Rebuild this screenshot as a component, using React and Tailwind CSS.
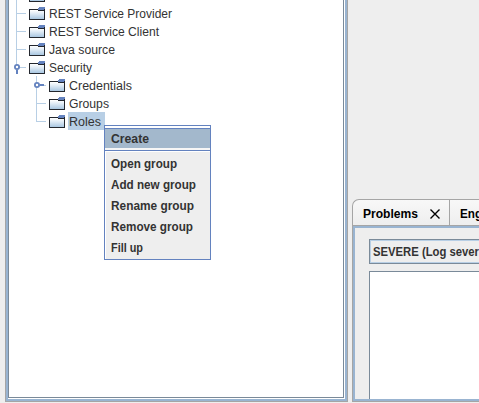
const rows = [
  { label: '', depth: 0 },
  { label: 'REST Service Provider', depth: 0, w: 123 },
  { label: 'REST Service Client', depth: 0, w: 110 },
  { label: 'Java source', depth: 0, w: 66 },
  { label: 'Security', depth: 0, toggle: 'open', w: 43 },
  { label: 'Credentials', depth: 1, toggle: 'closed', w: 63 },
  { label: 'Groups', depth: 1, w: 40 },
  { label: 'Roles', depth: 1, w: 32, selected: true },
];

const items = [
  ['Open group', 66],
  ['Add new group', 85],
  ['Rename group', 83],
  ['Remove group', 82],
  ['Fill up', 32],
];

function Folder() {
  return (
    <svg className="mt-[2px] block shrink-0" width="16" height="16" viewBox="0 0 16 16" shapeRendering="crispEdges">
      <defs>
        <linearGradient id="fold" x1="0" y1="0" x2="0" y2="1">
          <stop offset="0" stopColor="#ffffff" />
          <stop offset="0.35" stopColor="#e4eef7" />
          <stop offset="1" stopColor="#a9c7e1" />
        </linearGradient>
      </defs>
      <rect x="1" y="4" width="14" height="9" fill="url(#fold)" />
      <path d="M0 3h9v1H0zM0 3h1v11H0zM0 13h16v1H0zM15 3h1v11h-1zM9 4h6v1H9z" fill="#23272e" />
      <path d="M10 1h6v1h-6zM9 2h7v1H9zM9 3h6v1H9z" fill="#6382bf" />
    </svg>
  );
}

function Branch({ row, end }) {
  return (
    <svg className="block shrink-0" width="16" height="18" viewBox="0 0 16 18">
      <rect x="3" y="0" width="1" height={end ? 10 : 18} fill="#b8cfe5" shapeRendering="crispEdges" />
      <rect x="4" y="9" width="9" height="1" fill="#b8cfe5" shapeRendering="crispEdges" />
      {row.toggle && <circle cx="4" cy="9" r="2.1" fill="#fff" stroke="#6382bf" strokeWidth="1.8" />}
      {row.toggle === 'open' && <rect x="3" y="12" width="2" height="4" fill="#6382bf" />}
      {row.toggle === 'closed' && <rect x="7" y="8" width="4" height="2" fill="#6382bf" />}
    </svg>
  );
}

function Label({ text, w }) {
  return (
    <svg className="block shrink-0 overflow-visible" width={w} height="18">
      <text x="0" y="14" textLength={w} lengthAdjust="spacingAndGlyphs" fill="#333">{text}</text>
    </svg>
  );
}

function Tree() {
  return (
    <div className="-mt-[14px] pl-[4px] text-[12px]">
      {rows.map((r, i) => (
        <div key={i} className={'flex h-[18px] ' + (r.depth ? 'pl-5' : '')}>
          <Branch row={r} end={r.selected || r.toggle === 'open'} />
          <Folder />
          <div className={'ml-[3px] h-[18px] pl-px pr-1 ' + (r.selected ? 'bg-[#b8cfe5]' : '')}>
            {r.label && <Label text={r.label} w={r.w} />}
          </div>
        </div>
      ))}
    </div>
  );
}

function BoldText({ text, w, color = '#333333' }) {
  return (
    <svg className="block shrink-0 overflow-visible" width={w} height="16">
      <text x="0" y="12" textLength={w} lengthAdjust="spacingAndGlyphs" fill={color}>{text}</text>
    </svg>
  );
}

function Menu() {
  return (
    <div className="absolute left-[104px] top-[125px] h-[135px] w-[107px] border border-[#6382bf] bg-[#eeeeee] text-[12px] font-bold">
      <div className="h-[2px] bg-white" />
      <div className="h-[20px] border-t border-[#6382bf] bg-[#a3b8cc] pl-[6px] pt-[2px]">
        <BoldText text="Create" w={38} />
      </div>
      <div className="h-[3px] border-b border-[#6382bf] bg-[#f6f6f6]" />
      <div className="h-[108px] border-l border-t border-white pl-[5px] pt-[4px]">
        {items.map(([t, w]) => (
          <div key={t} className="h-[21px]"><BoldText text={t} w={w} /></div>
        ))}
      </div>
    </div>
  );
}

export default function App() {
  return (
    <div className="relative flex h-[403px] w-[479px] overflow-hidden bg-[#eeeeee] pl-[5px] font-['Liberation_Sans',Arial,sans-serif]">
      <div className="h-[402px] w-[343px] shrink-0 border-x border-b border-[#a5a5a5]">
        <div className="h-full border-x-2 border-b-2 border-[#99b4d1] bg-white pb-px pr-px">
          <div className="h-full overflow-hidden border-x border-b border-[#7a8a99] bg-white">
            <Tree />
          </div>
        </div>
      </div>
      <div className="ml-1 flex w-[127px] shrink-0 flex-col pt-[199px] text-[12px] font-bold">
        <div className="flex h-[26px] rounded-tl-[7px] border-l border-t border-[#a5a5a5] bg-linear-to-b from-[#f8f8f8] to-[#eeeeee]">
          <div className="flex w-[97px] shrink-0 border-r border-[#a5a5a5] pl-[10px] pt-[6px]">
            <BoldText text="Problems" w={55} color="#000" />
            <svg className="ml-[12px] mt-[3px] shrink-0" width="10" height="10" viewBox="0 0 10 10">
              <path d="M.5 .5l9 9M9.5 .5l-9 9" stroke="#000" strokeWidth="1.4" />
            </svg>
          </div>
          <div className="pl-[10px] pt-[6px]"><BoldText text="Eng" w={22} color="#000" /></div>
        </div>
        <div className="h-[177px] border-y border-l border-[#a5a5a5]">
          <div className="flex h-full flex-col border-b-2 border-l-2 border-t-2 border-[#99b4d1] pl-[14px] pt-[11px]">
            <div className="h-[25px] shrink-0 border-y border-l border-[#7a8a99]">
              <div className="h-full border-y border-l border-[#b8cfe5] pl-[2px] pt-[3px]">
                <BoldText text="SEVERE (Log sever" w={106} />
              </div>
            </div>
            <div className="mt-[7px] flex-1 border-l border-t border-[#7a8a99] bg-white" />
          </div>
        </div>
      </div>
      <Menu />
    </div>
  );
}
